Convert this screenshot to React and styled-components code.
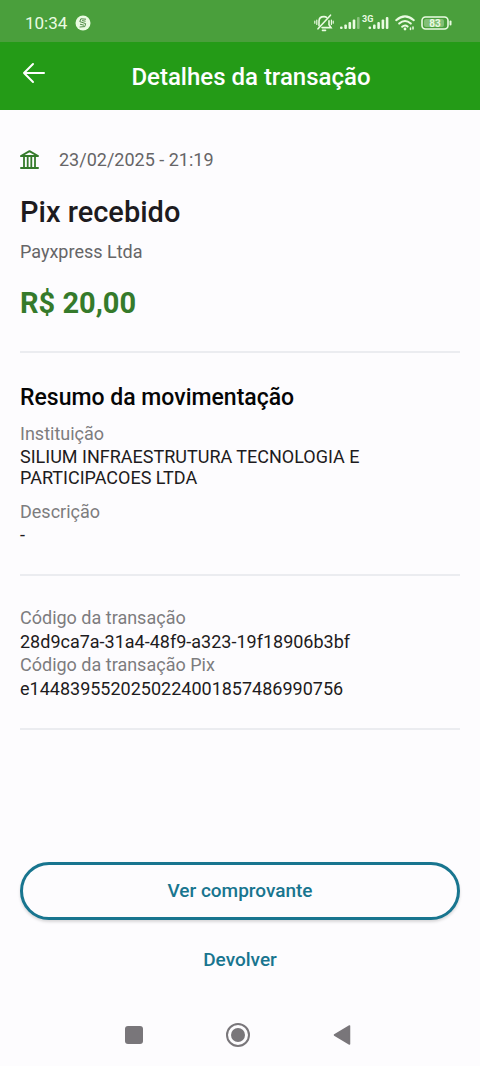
import React from "react";
import styled, { createGlobalStyle } from "styled-components";

const GlobalStyle = createGlobalStyle`
  *, *::before, *::after { box-sizing: border-box; }
  body {
    margin: 0;
    background: #fdfcfe;
    font-family: Roboto, "Liberation Sans", sans-serif;
    color: #1d1b20;
  }
`;

const Screen = styled.div`
  display: flex;
  flex-direction: column;
  min-height: 100vh;
`;

const StatusBar = styled.div`
  display: flex;
  align-items: center;
  justify-content: space-between;
  height: 42px;
  padding: 3px 28px 0 25px;
  background: #4a9f3c;
  color: #eafbe2;
`;

const StatusGroup = styled.div`
  display: flex;
  align-items: center;
  gap: ${(p) => p.$gap}px;
`;

const Clock = styled.time`
  font-size: 17px;
  line-height: 20px;
  font-weight: 400;
`;

const AppBar = styled.header`
  display: grid;
  grid-template-columns: 48px 1fr 26px;
  align-items: center;
  height: 68px;
  padding: 0 10px;
  background: #249b17;
  color: #fff;
`;

const BackButton = styled.button`
  display: grid;
  place-items: center;
  width: 48px;
  height: 48px;
  margin-bottom: 6px;
  padding: 0;
  border: 0;
  background: none;
  color: inherit;
`;

const BarTitle = styled.h1`
  margin: 0;
  padding-top: 2px;
  font-size: 24px;
  line-height: 32px;
  font-weight: 500;
  text-align: center;
`;

const Content = styled.main`
  padding: 0 20px;
`;

const Section = styled.section`
  padding: ${(p) => (p.$compact ? "30px 0 28px" : "31px 0 29px")};
  border-bottom: 2px solid #ebecf0;
`;

const DateRow = styled.div`
  display: flex;
  align-items: center;
  gap: 19px;
  padding-top: 7px;
`;

const Muted = styled.p`
  margin: 0;
  font-size: 18px;
  line-height: 24px;
  color: #666567;
`;

const Heading = styled.h2`
  margin: 20px 0 8px;
  font-size: 29px;
  line-height: 40px;
  font-weight: 500;
`;

const Amount = styled.p`
  margin: 20px 0 0;
  font-size: 29px;
  line-height: 38px;
  font-weight: 700;
  color: #357a2b;
`;

const Subheading = styled.h3`
  margin: 0 0 10px;
  font-size: 23px;
  line-height: 28px;
  font-weight: 500;
  color: #050505;
`;

const Details = styled.dl`
  display: grid;
  gap: ${(p) => p.$gap}px;
  margin: 0;
`;

const Term = styled.dt`
  font-size: 18px;
  line-height: 24px;
  color: #7d7c7e;
`;

const Value = styled.dd`
  margin: 0;
  font-size: 18px;
  line-height: ${(p) => (p.$tight ? 21 : 23)}px;
`;

const Actions = styled.footer`
  display: grid;
  gap: 20px;
  margin-top: auto;
  padding: 24px 20px 26px;
`;

const OutlineButton = styled.button`
  height: 58px;
  border: 3px solid #18758f;
  border-radius: 29px;
  background: #fdfcfe;
  box-shadow: 0 2px 3px rgba(0, 0, 0, 0.15);
  font: 500 19px/24px Roboto, sans-serif;
  color: #18758f;
`;

const TextButton = styled.button`
  height: 40px;
  border: 0;
  background: none;
  font: 500 19px/24px Roboto, sans-serif;
  color: #18758f;
`;

const SystemNav = styled.nav`
  display: flex;
  justify-content: center;
  gap: 56px;
  height: 60px;
  padding-right: 4px;
`;

const NavButton = styled.button`
  display: grid;
  place-items: center;
  width: 48px;
  height: 58px;
  padding: 0;
  border: 0;
  background: none;
`;

const BadgeIcon = () => (
  <svg width="16" height="16" viewBox="0 0 16 16" aria-hidden="true">
    <circle cx="8" cy="8" r="7.5" fill="#eafbe2" />
    <path d="M11 4.2 5.8 3.8 4.8 6.6 10.6 8.6 9.8 11.6 4.6 12M5 9.2l4 1M7 5.6l3.6.6" fill="none" stroke="#4f8a46" strokeWidth="1" />
  </svg>
);

const MutedBellIcon = () => (
  <svg width="20" height="18" viewBox="0 0 20 18" fill="none" stroke="currentColor" strokeWidth="1.6" strokeLinecap="round" aria-hidden="true">
    <path d="M5 11.8V7.2C5 4.5 7 2.6 10 2.6c1 0 1.9.2 2.6.7M15 6.8v4l2 2.8H8" />
    <path d="M16.5 1.2 4 14.8M8.5 16.4h3" />
    <path d="M2.8 6v4.5M.8 7.2v2M17.4 6v4.5M19.2 7.2v2" strokeWidth="1.2" />
  </svg>
);

const SignalIcon = () => (
  <svg width="49" height="18" viewBox="0 0 49 18" fill="currentColor" aria-hidden="true">
    <rect x="0" y="12.5" width="2.6" height="2.5" rx="1" />
    <rect x="4.3" y="10.5" width="2.6" height="4.5" rx="1" />
    <rect x="8.5" y="8" width="2.6" height="7" rx="1" />
    <rect x="12.7" y="5.5" width="2.6" height="9.5" rx="1" />
    <rect x="17" y="3" width="2.6" height="12" rx="1" opacity=".4" />
    <text x="22" y="8" fontSize="9" fontWeight="700" fontFamily="Roboto, sans-serif">3G</text>
    <rect x="28.5" y="12.5" width="2.6" height="2.5" rx="1" />
    <rect x="33" y="10.5" width="2.6" height="4.5" rx="1" />
    <rect x="37.3" y="8" width="2.6" height="7" rx="1" />
    <rect x="41.6" y="5.5" width="2.6" height="9.5" rx="1" />
    <rect x="45.8" y="3" width="2.6" height="12" rx="1" />
  </svg>
);

const WifiIcon = () => (
  <svg width="20" height="16" viewBox="0 0 20 16" fill="none" stroke="currentColor" strokeWidth="2" strokeLinecap="round" aria-hidden="true">
    <path d="M1.2 5.2Q10-2.4 18.8 5.2M4.2 8.6Q10 3.4 15.8 8.6M7.2 11.8Q10 9.2 12.6 11.6" />
    <circle cx="10" cy="14" r="1.4" fill="currentColor" stroke="none" />
    <path d="M15.5 13v1.5M18 12v2" strokeWidth="1.5" />
  </svg>
);

const BatteryIcon = () => (
  <svg width="31" height="14" viewBox="0 0 31 14" role="img" aria-label="83%">
    <rect x="3" y="3" width="20" height="8" rx="2" fill="currentColor" opacity=".35" />
    <rect x="1" y="1" width="26" height="12" rx="3.5" fill="none" stroke="currentColor" strokeWidth="1.6" />
    <path d="M29.5 5.5v3" stroke="currentColor" strokeWidth="2" strokeLinecap="round" />
    <text x="14" y="10.5" textAnchor="middle" fontSize="10" fontWeight="700" fill="currentColor" fontFamily="Roboto, sans-serif">83</text>
  </svg>
);

const ArrowIcon = () => (
  <svg width="24" height="22" viewBox="0 0 24 22" fill="none" stroke="currentColor" strokeWidth="2" strokeLinecap="round" strokeLinejoin="round" aria-hidden="true">
    <path d="M22 11H2M11 2 2 11l9 9" />
  </svg>
);

const BankIcon = () => (
  <svg width="20" height="20" viewBox="0 0 20 20" fill="none" stroke="#357a2b" strokeWidth="2" strokeLinecap="round" strokeLinejoin="round" aria-hidden="true">
    <path d="M1 6h17L9.5 1.2zM1 18h17" />
    <path d="M4 7v10.5M7.7 7v10.5M11.3 7v10.5M15 7v10.5" strokeWidth="1.8" />
  </svg>
);

export default function App() {
  return (
    <>
      <GlobalStyle />
      <Screen>
        <StatusBar>
          <StatusGroup $gap={8}>
            <Clock>10:34</Clock>
            <BadgeIcon />
          </StatusGroup>
          <StatusGroup $gap={6}>
            <MutedBellIcon />
            <SignalIcon />
            <WifiIcon />
            <BatteryIcon />
          </StatusGroup>
        </StatusBar>

        <AppBar>
          <BackButton type="button" aria-label="Voltar">
            <ArrowIcon />
          </BackButton>
          <BarTitle>Detalhes da transação</BarTitle>
        </AppBar>

        <Content>
          <Section>
            <DateRow>
              <BankIcon />
              <Muted as="time">23/02/2025 - 21:19</Muted>
            </DateRow>
            <Heading>Pix recebido</Heading>
            <Muted>Payxpress Ltda</Muted>
            <Amount>R$ 20,00</Amount>
          </Section>

          <Section>
            <Subheading>Resumo da movimentação</Subheading>
            <Details $gap={12}>
              <div>
                <Term>Instituição</Term>
                <Value $tight>
                  SILIUM INFRAESTRUTURA TECNOLOGIA E
                  <br />
                  PARTICIPACOES LTDA
                </Value>
              </div>
              <div>
                <Term>Descrição</Term>
                <Value $tight>-</Value>
              </div>
            </Details>
          </Section>

          <Section $compact>
            <Details $gap={0}>
              <div>
                <Term>Código da transação</Term>
                <Value>28d9ca7a-31a4-48f9-a323-19f18906b3bf</Value>
              </div>
              <div>
                <Term>Código da transação Pix</Term>
                <Value>e1448395520250224001857486990756</Value>
              </div>
            </Details>
          </Section>
        </Content>

        <Actions>
          <OutlineButton type="button">Ver comprovante</OutlineButton>
          <TextButton type="button">Devolver</TextButton>
        </Actions>

        <SystemNav aria-label="Sistema">
          <NavButton type="button" aria-label="Recentes">
            <svg width="18" height="18" viewBox="0 0 18 18" aria-hidden="true">
              <rect width="18" height="18" rx="3" fill="#79767a" />
            </svg>
          </NavButton>
          <NavButton type="button" aria-label="Início">
            <svg width="24" height="24" viewBox="0 0 24 24" aria-hidden="true">
              <circle cx="12" cy="12" r="11" fill="none" stroke="#79767a" strokeWidth="2" />
              <circle cx="12" cy="12" r="7" fill="#79767a" />
            </svg>
          </NavButton>
          <NavButton type="button" aria-label="Voltar">
            <svg width="18" height="20" viewBox="0 0 18 20" aria-hidden="true">
              <path d="M1.5 10 16.5 1v18z" fill="#79767a" stroke="#79767a" strokeWidth="1.5" strokeLinejoin="round" />
            </svg>
          </NavButton>
        </SystemNav>
      </Screen>
    </>
  );
}
